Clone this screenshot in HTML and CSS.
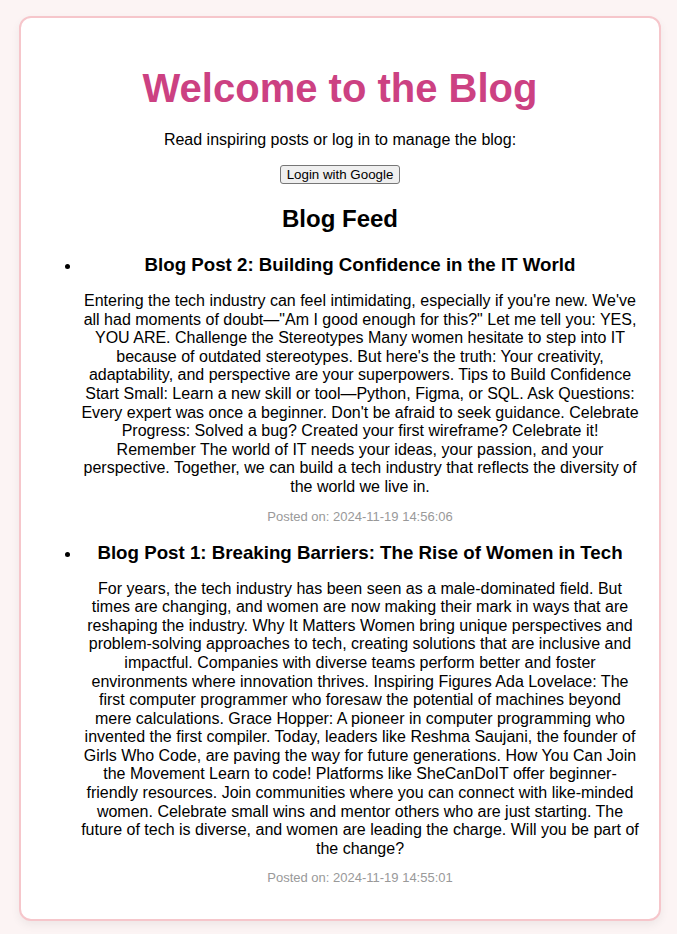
FILE: index.html
```html
<!DOCTYPE html>
<html lang="en">
<head>
<meta charset="utf-8">
<title>Blog</title>
<link rel="stylesheet" href="styles.css">
</head>
<body>
<div class="card">
  <h1 class="title">Welcome to the Blog</h1>
  <p class="intro">Read inspiring posts or log in to manage the blog:</p>
  <button class="login">Login with Google</button>
  <h2 class="feed-title">Blog Feed</h2>
  <ul class="feed">
    <li class="post">
      <h3 class="post-title">Blog Post 2: Building Confidence in the IT World</h3>
      <p class="post-body">Entering the tech industry can feel intimidating, especially if you're new. We've all had moments of doubt—"Am I good enough for this?" Let me tell you: YES, YOU ARE. Challenge the Stereotypes Many women hesitate to step into IT because of outdated stereotypes. But here's the truth: Your creativity, adaptability, and perspective are your superpowers. Tips to Build Confidence Start Small: Learn a new skill or tool—Python, Figma, or SQL. Ask Questions: Every expert was once a beginner. Don't be afraid to seek guidance. Celebrate Progress: Solved a bug? Created your first wireframe? Celebrate it! Remember The world of IT needs your ideas, your passion, and your perspective. Together, we can build a tech industry that reflects the diversity of the world we live in.</p>
      <p class="post-date">Posted on: 2024-11-19 14:56:06</p>
    </li>
    <li class="post">
      <h3 class="post-title">Blog Post 1: Breaking Barriers: The Rise of Women in Tech</h3>
      <p class="post-body">For years, the tech industry has been seen as a male-dominated field. But times are changing, and women are now making their mark in ways that are reshaping the industry. Why It Matters Women bring unique perspectives and problem-solving approaches to tech, creating solutions that are inclusive and impactful. Companies with diverse teams perform better and foster environments where innovation thrives. Inspiring Figures Ada Lovelace: The first computer programmer who foresaw the potential of machines beyond mere calculations. Grace Hopper: A pioneer in computer programming who invented the first compiler. Today, leaders like Reshma Saujani, the founder of Girls Who Code, are paving the way for future generations. How You Can Join the Movement Learn to code! Platforms like SheCanDoIT offer beginner-friendly resources. Join communities where you can connect with like-minded women. Celebrate small wins and mentor others who are just starting. The future of tech is diverse, and women are leading the charge. Will you be part of the change?</p>
      <p class="post-date">Posted on: 2024-11-19 14:55:01</p>
    </li>
  </ul>
</div>
</body>
</html>
```
FILE: styles.css
```css
html, body {
  margin: 0;
  padding: 0;
}
body {
  background: #fcf4f4;
  font-family: "Liberation Sans", Arial, Helvetica, sans-serif;
  color: #000;
  padding: 16px 16px 15px 19px;
}
.card {
  background: #fff;
  border: 2px solid #f6c6cb;
  border-radius: 12px;
  box-shadow: 0 4px 10px rgba(0, 0, 0, 0.06);
  padding: 20px 20px 16px;
  text-align: center;
  width: 598px;
}
.title {
  color: #cc4182;
  font-size: 40px;
  margin: 28px 0 20px;
}
.intro {
  font-size: 16px;
  margin: 0 0 16px;
}
.login {
  font-family: "Liberation Sans", Arial, sans-serif;
  font-size: 13.33px;
  color: #000;
  background: #efefef;
  border: 1px solid #767676;
  border-radius: 3px;
  padding: 1px 6px;
  height: 19px;
  line-height: 15px;
}
.feed-title {
  font-size: 24px;
  margin: 21px 0 21px;
}
.feed {
  margin: 0;
  padding-left: 40px;
}
.post {
  text-align: center;
}
.post-title {
  font-size: 18.72px;
  margin: 0 0 16px;
}
.post-body {
  font-size: 16px;
  line-height: 18.6px;
  margin: 0 0 12px;
}
.post-date {
  font-size: 13px;
  color: #999;
  margin: 0 0 18px;
}
```
